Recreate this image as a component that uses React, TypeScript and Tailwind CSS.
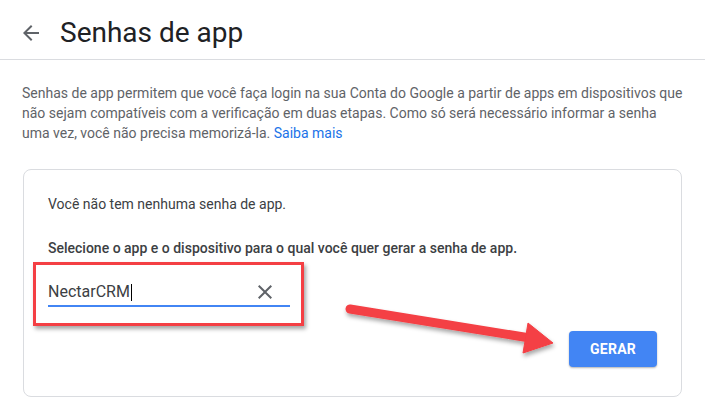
import React from "react";

// ─── Icons ────────────────────────────────────────────────────────────────────

function BackIcon() {
  return (
    <svg width="24" height="24" viewBox="0 0 24 24" fill="#5f6368">
      <path d="M20 11H7.83l5.59-5.59L12 4l-8 8 8 8 1.41-1.41L7.83 13H20v-2z" />
    </svg>
  );
}

function CloseIcon() {
  return (
    <svg width="24" height="24" viewBox="0 0 24 24" fill="#5f6368">
      <path d="M19 6.41L17.59 5 12 10.59 6.41 5 5 6.41 10.59 12 5 17.59 6.41 19 12 13.41 17.59 19 19 17.59 13.41 12z" />
    </svg>
  );
}

// annotation arrow drawn on top of the screenshot
function CalloutArrow() {
  return (
    <svg
      className="pointer-events-none absolute left-0 top-0"
      width="705"
      height="419"
      viewBox="0 0 705 419"
    >
      <defs>
        <filter id="shadow" x="-10%" y="-50%" width="130%" height="250%">
          <feDropShadow dx="1" dy="3" stdDeviation="2" floodColor="#000" floodOpacity="0.35" />
        </filter>
      </defs>
      <g filter="url(#shadow)" fill="#f43f44" stroke="#f43f44">
        <line x1="350" y1="309" x2="530" y2="338" strokeWidth="9" strokeLinecap="round" />
        <polygon points="528,323 553,343 523,353" strokeWidth="1" strokeLinejoin="round" />
      </g>
    </svg>
  );
}

// ─── Page ─────────────────────────────────────────────────────────────────────

export default function App() {
  return (
    <div
      className="relative h-[419px] w-[705px] overflow-hidden bg-white"
      style={{ fontFamily: "Roboto, 'Noto Sans', Arial, sans-serif" }}
    >
      <header className="flex h-[60px] items-center border-b border-[#dadce0] pl-[19px]">
        <span className="mt-[6px] flex">
          <BackIcon />
        </span>
        <h1 className="ml-[17px] mt-[6px] text-[28px] leading-none text-[#202124]">Senhas de app</h1>
      </header>

      <div className="px-[22px]">
        <p className="mt-[23px] whitespace-nowrap text-[14px] leading-[20px] text-[#5f6368]">
          Senhas de app permitem que você faça login na sua Conta do Google a partir de apps em dispositivos que
          <br />
          não sejam compatíveis com a verificação em duas etapas. Como só será necessário informar a senha
          <br />
          uma vez, você não precisa memorizá-la. <a className="text-[#1a73e8]">Saiba mais</a>
        </p>

        <div className="ml-px mt-[26px] w-[659px] rounded-[8px] border border-[#dadce0] px-6 pb-[29px] pt-6">
          <p className="text-[14px] leading-[20px] text-[#3c4043]">Você não tem nenhuma senha de app.</p>
          <p className="mt-6 text-[14px] font-medium leading-[20px] text-[#3c4043]">
            Selecione o app e o dispositivo para o qual você quer gerar a senha de app.
          </p>

          <div className="-ml-[15px] mt-1 h-[64px] w-[271px] border-[3px] border-[#f43f44] pl-[12px] pt-4 shadow-[2px_3px_4px_rgba(0,0,0,0.35)]">
            <div className="flex h-[26px] w-[242px] items-center border-b-2 border-[#4285f4] pb-[2px]">
              <span className="text-[16px] leading-[24px] text-[#3c4043]">NectarCRM</span>
              <span className="ml-px h-[17px] w-px bg-black" />
              <span className="ml-auto mr-[13px] flex">
                <CloseIcon />
              </span>
            </div>
          </div>

          <div className="mt-[5px] flex justify-end">
            <button className="h-9 w-[88px] rounded-[4px] bg-[#4285f4] text-[14px] font-bold tracking-[0.02em] text-white shadow-[0_1px_2px_rgba(0,0,0,0.3)]">
              GERAR
            </button>
          </div>
        </div>
      </div>

      <CalloutArrow />
    </div>
  );
}
